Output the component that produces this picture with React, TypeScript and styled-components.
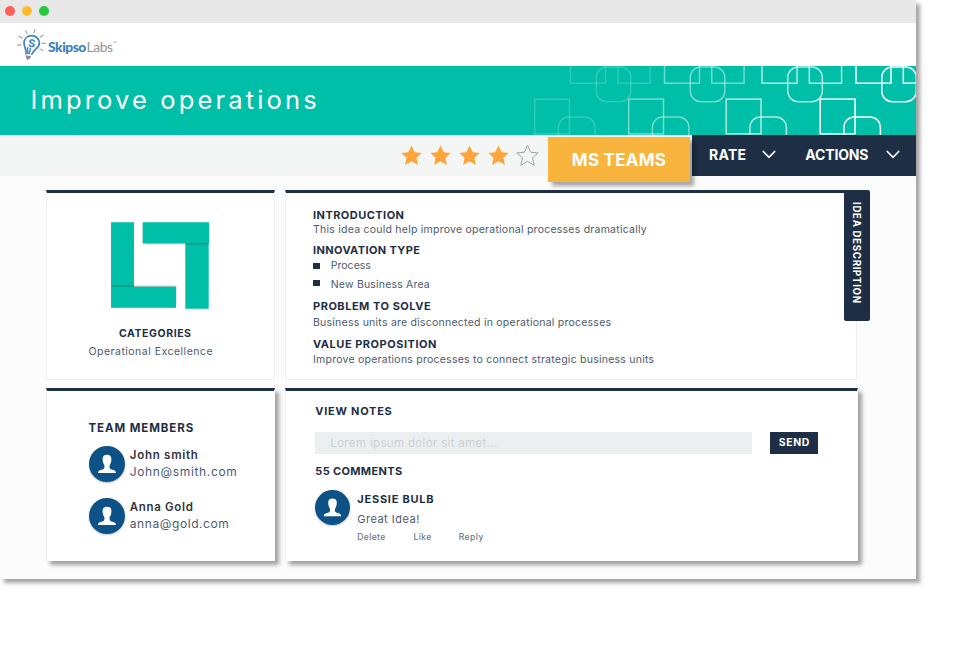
import React from "react";
import styled, { createGlobalStyle, css } from "styled-components";

const NAVY = "#1e2f45";
const TEAL = "#00bfa8";
const BLUE = "#0d5286";

const GlobalStyle = createGlobalStyle`
  * { box-sizing: border-box; }
  html, body { min-height: 100vh; }
  body {
    margin: 0;
    background: #fff;
    font-family: Inter, "Open Sans", sans-serif;
    color: ${NAVY};
  }
  svg { display: block; flex: none; }
`;

const Page = styled.div`
  min-height: 100vh;
`;

const AppWindow = styled.div`
  width: 916.4px;
  height: 579.4px;
  background: #fcfcfc;
  box-shadow: 4px 4px 4px rgba(0, 0, 0, 0.36);
`;

const TitleBar = styled.div`
  height: 22.5px;
  padding: 0 0 0 5.3px;
  display: flex;
  align-items: center;
  gap: 6.7px;
  background: #e8e8e8;
`;

const Dot = styled.span<{ $color: string }>`
  width: 10px;
  height: 10px;
  border-radius: 50%;
  background: ${(p) => p.$color};
`;

const BrandBar = styled.div`
  height: 43px;
  padding: 5.5px 0 0 16px;
  display: flex;
  align-items: flex-start;
  background: #fff;
`;

const BrandName = styled.div`
  margin: 11px 0 0 1px;
  display: flex;
  font: 900 13.8px/16px Lato, sans-serif;
  letter-spacing: -0.45px;
  color: #3b80c0;
`;

const BrandLight = styled.span`
  margin-left: 0.5px;
  font-weight: 400;
  color: #929397;
  letter-spacing: -0.35px;
`;

const BrandMark = styled.span`
  font-size: 5px;
  line-height: 9px;
  font-weight: 400;
  letter-spacing: -0.5px;
  color: #929397;
`;

const Hero = styled.header`
  height: 69px;
  padding-left: 30.5px;
  display: flex;
  align-items: center;
  justify-content: space-between;
  background: ${TEAL};
`;

const HeroTitle = styled.h1`
  margin: 0;
  font-size: 25.5px;
  line-height: 32px;
  font-weight: 400;
  letter-spacing: 3.15px;
  color: #fff;
`;

const Toolbar = styled.div`
  height: 41px;
  display: flex;
  align-items: flex-start;
  justify-content: flex-end;
  background: #f4f6f6;
`;

const Stars = styled.div`
  margin: 9.5px 9.3px 0 0;
  display: flex;
  gap: 5.9px;
`;

const TeamsButton = styled.button`
  position: relative;
  z-index: 1;
  width: 142px;
  height: 45.5px;
  margin: 2px 2px 0 0;
  padding: 0;
  border: 0;
  background: #f9b43e;
  box-shadow: 4px 4px 4px rgba(0, 0, 0, 0.35);
  font: 700 17px/46px Inter, sans-serif;
  letter-spacing: 0.25px;
  color: #fff;
`;

const Nav = styled.nav`
  width: 224.4px;
  height: 41px;
  padding: 0 16px 1.5px 17px;
  display: flex;
  align-items: center;
  background: ${NAVY};
`;

const NavItem = styled.div<{ $tracking: number; $gap: number }>`
  display: flex;
  align-items: center;
  gap: ${(p) => p.$gap}px;
  color: #fff;
  font-size: 14px;
  font-weight: 700;
  letter-spacing: ${(p) => p.$tracking}px;
  & + & { margin-left: auto; }
`;

const Board = styled.main`
  padding: 14.5px 0 0 46px;
  display: grid;
  grid-template-columns: 228.5px 572px;
  grid-template-rows: 190px 173px;
  gap: 8px 10.8px;
`;

const Card = styled.section<{ $raised?: boolean }>`
  position: relative;
  border: 1px solid #f0f1f2;
  border-top: 3px solid ${NAVY};
  background: #fff;
  ${(p) =>
    p.$raised &&
    css`
      border-color: ${NAVY} #fff #fff #f0f1f2;
      box-shadow: 4px 4px 4px rgba(0, 0, 0, 0.36);
    `}
`;

const CategoryCard = styled(Card)`
  padding: 29px 0 0 41.5px;
`;
const CategoryLogo = styled.div`
  margin-left: 22.5px;
  height: 88px;
`;
const CategoryLabels = styled.div`
  width: 126px;
  margin-top: 17px;
`;

const DetailsCard = styled(Card)`
  padding: 15px 0 0 26.7px;
`;

const TeamCard = styled(Card)`
  padding: 30px 0 0 41.5px;
`;

const NotesCard = styled(Card)`
  margin-right: -0.7px;
  padding: 13px 0 0 29px;
`;

const Text = styled.div<{ $ls?: number; $mt?: number; $size?: number; $indent?: number }>`
  margin-top: ${(p) => p.$mt ?? 0}px;
  padding-left: ${(p) => p.$indent ?? 0}px;
  line-height: 14px;
  font-size: ${(p) => p.$size ?? 10.5}px;
  letter-spacing: ${(p) => p.$ls ?? 0.24}px;
  white-space: nowrap;
  color: #4c5a6c;
`;

const Heading = styled(Text)`
  font-size: ${(p) => p.$size ?? 11}px;
  font-weight: 700;
  color: ${NAVY};
`;

const PersonName = styled(Text)`
  font-weight: 600;
  color: #333539;
`;

const BulletRow = styled.div<{ $mt: number; $drop: number }>`
  display: flex;
  align-items: flex-start;
  gap: 10.8px;
  margin-top: ${(p) => p.$mt}px;
  &::before {
    content: "";
    width: 7px;
    height: 6px;
    margin-top: ${(p) => p.$drop}px;
    background: ${NAVY};
  }
`;

const SideTab = styled.div`
  position: absolute;
  top: -3px;
  right: -13.5px;
  width: 26px;
  height: 131px;
  padding-top: 11.5px;
  border-radius: 0 2px 2px 2px;
  background: ${NAVY};
  writing-mode: vertical-rl;
  font-size: 9.7px;
  line-height: 27px;
  font-weight: 700;
  letter-spacing: 0.68px;
  color: #fff;
`;

const Person = styled.div<{ $mt: number; $gap: number }>`
  display: flex;
  align-items: flex-start;
  gap: ${(p) => p.$gap}px;
  margin-top: ${(p) => p.$mt}px;
`;

const AvatarCircle = styled.div<{ $size: number }>`
  width: ${(p) => p.$size}px;
  height: ${(p) => p.$size}px;
  border-radius: 50%;
  background: ${BLUE};
  box-shadow: 0 1px 2px rgba(0, 0, 0, 0.25);
`;

const NoteForm = styled.div`
  display: flex;
  margin-top: 14px;
  gap: 18.5px;
`;

const NoteInput = styled.div`
  width: 436.5px;
  height: 21.5px;
  padding-left: 15px;
  background: #ebeff0;
  font-size: 11.5px;
  line-height: 22px;
  letter-spacing: 0.34px;
  color: #cdcfd2;
`;

const SendButton = styled.button`
  width: 48px;
  height: 21.5px;
  padding: 0;
  border: 0;
  background: ${NAVY};
  font: 700 10.5px/22px Inter, sans-serif;
  letter-spacing: 0.6px;
  color: #fff;
`;

const CommentActions = styled.div`
  display: grid;
  grid-template-columns: 56.2px 45.2px auto;
  margin-top: 4px;
`;

const ActionLink = styled(Text)`
  font-weight: 500;
  color: #6d7886;
`;

const Bulb = () => (
  <svg width="31" height="33" viewBox="48 84 93 99" fill="none">
    <g stroke="#a5a6a9" strokeWidth="3.4">
      <path d="M51 136l13-2M55 108l13 7M76 91l6 11M105 87l-3 13M131 105l-11 7M124 130h13M119 147l11 5" />
    </g>
    <path
      d="M78 163C81 149 72 142 72 128C73 115 83 107 95 107C108 107 118 117 118 129C118 146 102 147 99 158L94 164"
      stroke="#3b80c0"
      strokeWidth="5"
    />
    <path d="M84 141C80 148 85 154 83 162M91 143C92 150 89 155 87 163" stroke="#3b80c0" strokeWidth="4" />
    <path d="M76 166l18 3-5 7-8 4z" fill="#8c8d91" />
    <text
      x="95"
      y="141"
      transform="rotate(8 94 130)"
      textAnchor="middle"
      fontFamily="Inter, sans-serif"
      fontSize="32"
      fontWeight="700"
      fill="#3b80c0"
    >
      S
    </text>
  </svg>
);

const Star = ({ filled = false }: { filled?: boolean }) => (
  <svg width="23" height="23" viewBox="0 0 23 23">
    <path
      d={
        filled
          ? "M11.5 1.500l3.200 6.700 7.100.8-5.300 4.700 1.400 7.200-6.400-3.600-6.400 3.600 1.400-7.200L1.200 9l7.100-.8z"
          : "M11.5 1.200l3.100 7 7.600.7-5.700 5 1.700 7.400-6.700-3.900-6.700 3.900 1.700-7.400-5.700-5 7.600-.7z"
      }
      fill={filled ? "#fda43a" : "none"}
      stroke={filled ? "none" : "#a0a2a4"}
      strokeWidth="1"
    />
  </svg>
);

const Chevron = () => (
  <svg width="14" height="9" viewBox="0 0 14 9" fill="none">
    <path d="M1.3 1.500L7 7.400l5.700-5.900" stroke="#fff" strokeWidth="1.7" strokeLinecap="round" />
  </svg>
);

const PATTERN_GROUPS = [
  { x: 0, opacity: 0.19 },
  { x: 94, opacity: 0.45 },
  { x: 191.5, opacity: 0.68 },
  { x: 285.5, opacity: 1 },
];

const HeroPattern = () => (
  <svg width="382" height="69" viewBox="534.5 65.5 382 69" fill="none">
    {PATTERN_GROUPS.map((g) => (
      <g key={g.x} transform={`translate(${g.x} 0)`} stroke="#fff" strokeOpacity={g.opacity} strokeWidth="1.5">
        <rect x="571" y="50" width="35" height="32.7" />
        <rect x="618.3" y="50" width="32.3" height="32.7" />
        <rect x="596.8" y="66.500" width="34.5" height="34.7" rx="10.5" />
        <rect x="535.2" y="98.6" width="34.8" height="34.8" />
        <rect x="558.9" y="116.5" width="36.5" height="34" rx="10.5" />
      </g>
    ))}
  </svg>
);

const KnotLogo = () => (
  <svg width="100" height="88" viewBox="0 0 100 88">
    <defs>
      <filter id="soft" x="-10%" y="-30%" width="120%" height="160%">
        <feGaussianBlur stdDeviation="1.1" />
      </filter>
    </defs>
    <path d="M0 .3h23v66H0zM74.300 20h23.400v66.700H74.300z" fill={TEAL} />
    <path d="M1 64h64v20H1zM32.500 2h65v20h-65z" fill="#000" opacity=".32" filter="url(#soft)" />
    <path d="M0 64.700h65v21.100H0zM31.700.3H98v21H31.700z" fill={TEAL} />
  </svg>
);

const Avatar = ({ size }: { size: number }) => (
  <AvatarCircle $size={size}>
    <svg width={size} height={size} viewBox="0 0 36 36">
      <path
        d="M18 8.800c-3.100 0-4.600 1.700-4.400 4.600.1 2.200.5 3.800 1.700 5.600.4 1.900.1 3.400-.9 4C12 24.300 9.200 24 9 27h18c-.2-3-3-2.700-5.400-4-1-.6-1.300-2.100-.9-4 1.200-1.800 1.600-3.400 1.700-5.600C22.600 10.500 21.100 8.800 18 8.800z"
        fill="#fff"
      />
    </svg>
  </AvatarCircle>
);

export default function App() {
  return (
    <Page>
      <GlobalStyle />
      <AppWindow>
        <TitleBar>
          <Dot $color="#fe5f57" />
          <Dot $color="#febc2e" />
          <Dot $color="#28c840" />
        </TitleBar>
        <BrandBar>
          <Bulb />
          <BrandName>
            Skipso<BrandLight>Labs</BrandLight>
            <BrandMark>™</BrandMark>
          </BrandName>
        </BrandBar>
        <Hero>
          <HeroTitle>Improve operations</HeroTitle>
          <HeroPattern />
        </Hero>
        <Toolbar>
          <Stars>
            <Star filled />
            <Star filled />
            <Star filled />
            <Star filled />
            <Star />
          </Stars>
          <TeamsButton>MS TEAMS</TeamsButton>
          <Nav>
            <NavItem $tracking={0.25} $gap={15.5}>
              RATE
              <Chevron />
            </NavItem>
            <NavItem $tracking={-0.15} $gap={18}>
              ACTIONS
              <Chevron />
            </NavItem>
          </Nav>
        </Toolbar>

        <Board>
          <CategoryCard>
            <CategoryLogo>
              <KnotLogo />
            </CategoryLogo>
            <CategoryLabels>
              <Heading $size={10.5} $ls={0.57} $indent={30.5}>CATEGORIES</Heading>
              <Text $ls={0.49} $mt={4}>Operational Excellence</Text>
            </CategoryLabels>
          </CategoryCard>

          <DetailsCard>
            <Heading $ls={0.46}>INTRODUCTION</Heading>
            <Text $mt={1}>This idea could help improve operational processes dramatically</Text>
            <Heading $mt={6} $ls={0.38}>INNOVATION TYPE</Heading>
            <BulletRow $mt={2} $drop={4}>
              <Text $ls={0.02}>Process</Text>
            </BulletRow>
            <BulletRow $mt={5} $drop={1.5}>
              <Text $ls={0.18}>New Business Area</Text>
            </BulletRow>
            <Heading $mt={7} $ls={0.52}>PROBLEM TO SOLVE</Heading>
            <Text $mt={2.5}>Business units are disconnected in operational processes</Text>
            <Heading $mt={7.5} $ls={0.52}>VALUE PROPOSITION</Heading>
            <Text $mt={2}>Improve operations processes to connect strategic business units</Text>
            <SideTab>IDEA DESCRIPTION</SideTab>
          </DetailsCard>

          <TeamCard $raised>
            <Heading $size={11.5} $ls={0.9}>TEAM MEMBERS</Heading>
            <Person $mt={11} $gap={5.3}>
              <Avatar size={36} />
              <div>
                <PersonName $size={11.5} $ls={0.73} $mt={2}>John smith</PersonName>
                <Text $size={12} $ls={0.64} $mt={3}>John@smith.com</Text>
              </div>
            </Person>
            <Person $mt={16} $gap={5.3}>
              <Avatar size={36} />
              <div>
                <PersonName $size={11.5} $ls={0.66} $mt={2}>Anna Gold</PersonName>
                <Text $size={12} $ls={0.58} $mt={3}>anna@gold.com</Text>
              </div>
            </Person>
          </TeamCard>

          <NotesCard $raised>
            <Heading $ls={0.75}>VIEW NOTES</Heading>
            <NoteForm>
              <NoteInput>Lorem ipsum dolor sit amet...</NoteInput>
              <SendButton>SEND</SendButton>
            </NoteForm>
            <Heading $mt={10.5} $ls={0.34}>55 COMMENTS</Heading>
            <Person $mt={12} $gap={7}>
              <Avatar size={35} />
              <div>
                <Heading $mt={2} $ls={0.76}>JESSIE BULB</Heading>
                <Text $size={11} $ls={0.49} $mt={6}>Great Idea!</Text>
                <CommentActions>
                  <ActionLink $size={8.5} $ls={0.39}>Delete</ActionLink>
                  <ActionLink $size={8.5} $ls={0.45}>Like</ActionLink>
                  <ActionLink $size={8.5} $ls={0.52}>Reply</ActionLink>
                </CommentActions>
              </div>
            </Person>
          </NotesCard>
        </Board>
      </AppWindow>
    </Page>
  );
}
